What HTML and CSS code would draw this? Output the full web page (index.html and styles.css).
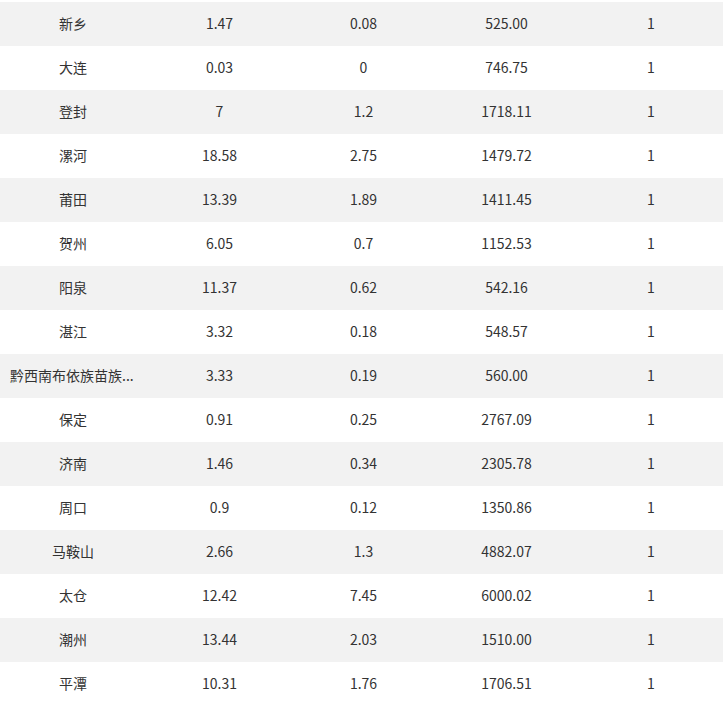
FILE: index.html
```html
<!DOCTYPE html>
<html lang="zh-CN">
<head>
<meta charset="utf-8">
<link rel="stylesheet" href="styles.css">
</head>
<body>
<table class="data">
<colgroup>
<col class="c1"><col class="c2"><col class="c3"><col class="c4"><col class="c5">
</colgroup>
<tbody>
<tr><td>新乡</td><td>1.47</td><td>0.08</td><td>525.00</td><td>1</td></tr>
<tr><td>大连</td><td>0.03</td><td>0</td><td>746.75</td><td>1</td></tr>
<tr><td>登封</td><td>7</td><td>1.2</td><td>1718.11</td><td>1</td></tr>
<tr><td>漯河</td><td>18.58</td><td>2.75</td><td>1479.72</td><td>1</td></tr>
<tr><td>莆田</td><td>13.39</td><td>1.89</td><td>1411.45</td><td>1</td></tr>
<tr><td>贺州</td><td>6.05</td><td>0.7</td><td>1152.53</td><td>1</td></tr>
<tr><td>阳泉</td><td>11.37</td><td>0.62</td><td>542.16</td><td>1</td></tr>
<tr><td>湛江</td><td>3.32</td><td>0.18</td><td>548.57</td><td>1</td></tr>
<tr><td class="long">黔西南布依族苗族...</td><td>3.33</td><td>0.19</td><td>560.00</td><td>1</td></tr>
<tr><td>保定</td><td>0.91</td><td>0.25</td><td>2767.09</td><td>1</td></tr>
<tr><td>济南</td><td>1.46</td><td>0.34</td><td>2305.78</td><td>1</td></tr>
<tr><td>周口</td><td>0.9</td><td>0.12</td><td>1350.86</td><td>1</td></tr>
<tr><td>马鞍山</td><td>2.66</td><td>1.3</td><td>4882.07</td><td>1</td></tr>
<tr><td>太仓</td><td>12.42</td><td>7.45</td><td>6000.02</td><td>1</td></tr>
<tr><td>潮州</td><td>13.44</td><td>2.03</td><td>1510.00</td><td>1</td></tr>
<tr><td>平潭</td><td>10.31</td><td>1.76</td><td>1706.51</td><td>1</td></tr>
</tbody>
</table>
</body>
</html>
```
FILE: styles.css
```css
html, body {
  margin: 0;
  padding: 0;
  background: #fff;
}
body {
  padding-top: 2px;
  font-family: "Segoe UI", "Noto Sans CJK SC", sans-serif;
  font-size: 14px;
  color: #333;
}
.data {
  width: 723px;
  border-collapse: collapse;
  table-layout: fixed;
}
.c1 { width: 146px; }
.c2 { width: 147px; }
.c3 { width: 141px; }
.c4 { width: 145px; }
.c5 { width: 144px; }
.data td {
  height: 44px;
  padding: 0 8px 2px 10px;
  text-align: center;
  vertical-align: middle;
  box-sizing: border-box;
  white-space: nowrap;
  overflow: hidden;
}
.data td:not(.long) {
  padding-left: 0;
  padding-right: 0;
}
.data tr:nth-child(odd) {
  background: #f2f2f2;
}
.data td.long {
  text-align: left;
}
```
